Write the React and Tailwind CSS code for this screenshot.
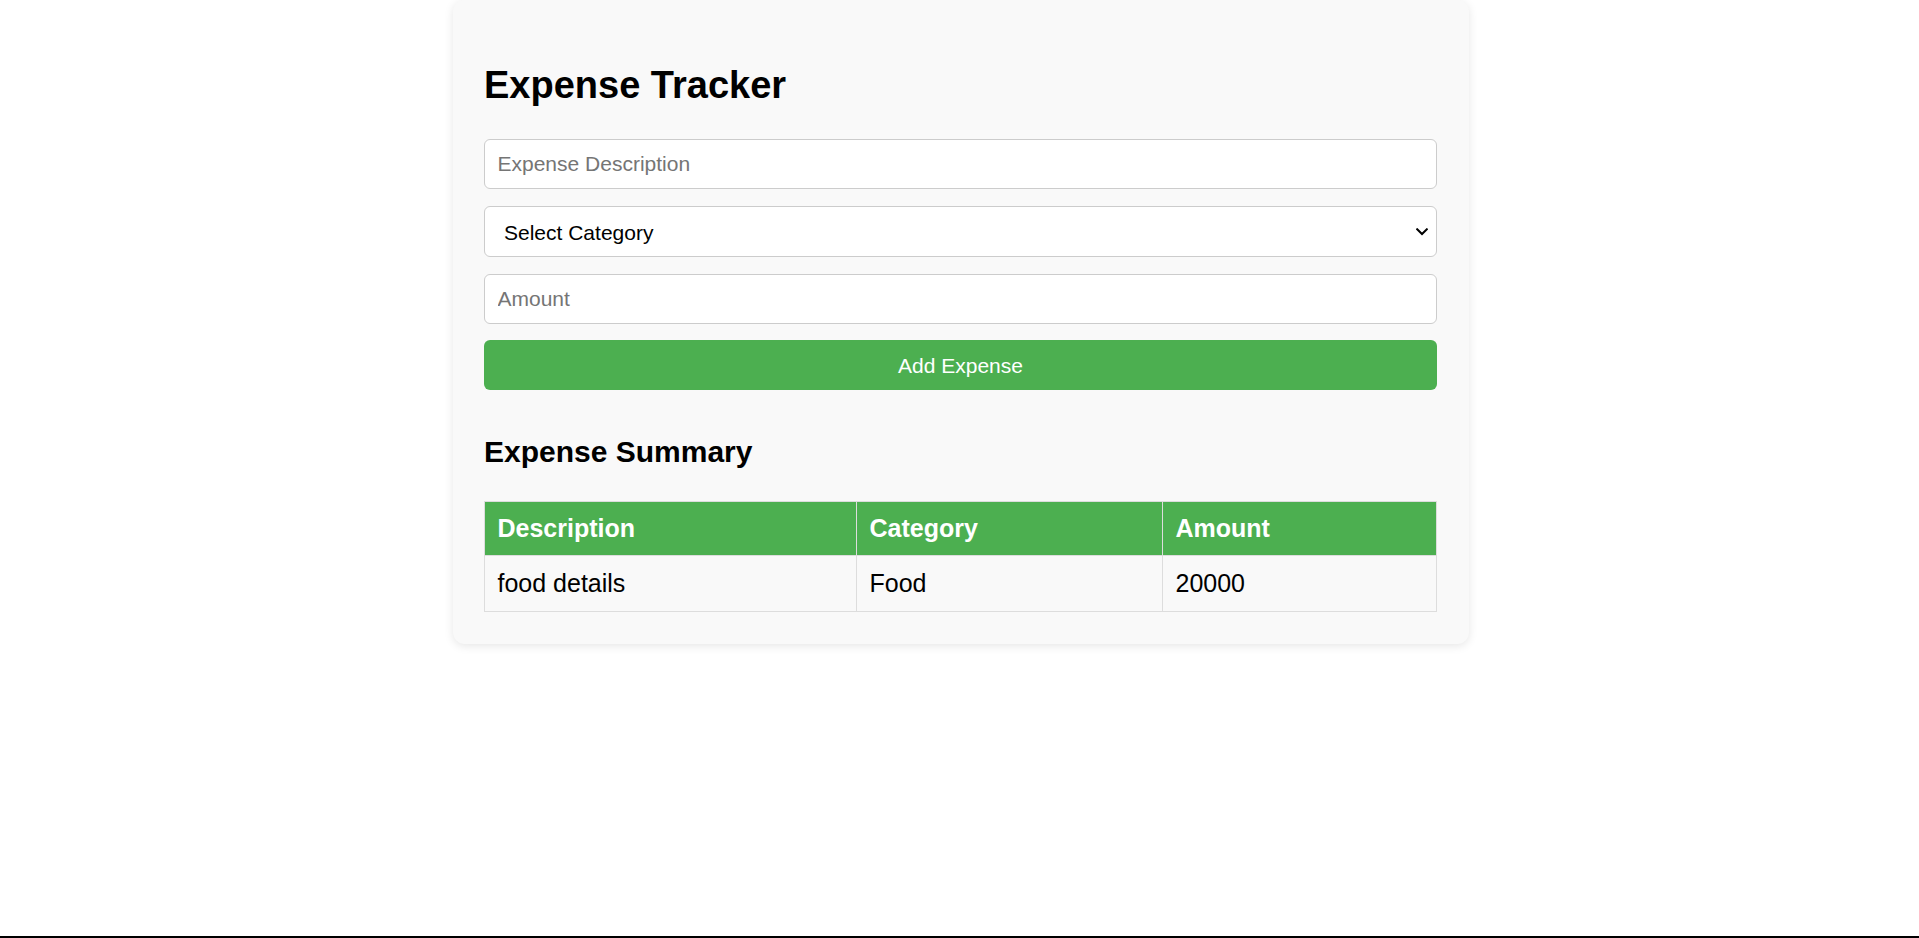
import React, { useState } from 'react';

const ExpenseTracker = () => {
    const [expenses, setExpenses] = useState([
        { id: 1, description: 'food details', category: 'Food', amount: 20000 },
    ]);
    const [description, setDescription] = useState('');
    const [category, setCategory] = useState('');
    const [amount, setAmount] = useState('');

    const addExpense = () => {
        if (!description || !category || !amount) return;
        setExpenses([...expenses, { id: Date.now(), description, category, amount }]);
        setDescription('');
        setCategory('');
        setAmount('');
    };

    const fieldClass = 'block w-full h-[50px] bg-white border border-[#cccccc] rounded-[6px] px-[12.5px] text-[21px] text-black outline-none placeholder:text-[#757575]';

    return (
        <div className="h-[938px] flex flex-col bg-white font-['Liberation_Sans',Arial,sans-serif]">
            <div className="flex justify-center pl-[3px]">
                <div className="w-[1016px] bg-[#f9f9f9] rounded-[12px] shadow-[0_2px_10px_rgba(0,0,0,0.1)] pl-[31px] pr-[32px] pb-[32px] pt-[31px]">
                    {/* Header */}
                    <h1 className="mt-[33px] mb-[32px] text-[38px] leading-[43px] font-bold text-black">Expense Tracker</h1>

                    {/* Form */}
                    <input
                        type="text"
                        placeholder="Expense Description"
                        value={description}
                        onChange={e => setDescription(e.target.value)}
                        className={fieldClass}
                    />
                    <div className="relative mt-[17px]">
                        <select
                            value={category}
                            onChange={e => setCategory(e.target.value)}
                            className="block w-full h-[51px] appearance-none bg-white border border-[#cccccc] rounded-[6px] pl-[19px] pr-[40px] pt-[3px] text-[21px] text-black outline-none"
                        >
                            <option value="">Select Category</option>
                            <option value="Food">Food</option>
                            <option value="Transport">Transport</option>
                            <option value="Shopping">Shopping</option>
                            <option value="Other">Other</option>
                        </select>
                        <svg className="absolute right-[9px] top-[22px] pointer-events-none" width="12" height="8" viewBox="0 0 12 8" fill="none">
                            <path d="M1.2 1.3 L6 6 L10.8 1.3" stroke="#000" strokeWidth="2" strokeLinecap="square" />
                        </svg>
                    </div>
                    <input
                        type="number"
                        placeholder="Amount"
                        value={amount}
                        onChange={e => setAmount(e.target.value)}
                        className={`${fieldClass} mt-[17px] [appearance:textfield] [&::-webkit-inner-spin-button]:appearance-none`}
                    />
                    <button
                        onClick={addExpense}
                        className="block w-full h-[50px] mt-[16px] pt-[1px] bg-[#4caf50] text-white text-[21px] rounded-[6px] cursor-pointer"
                    >
                        Add Expense
                    </button>

                    {/* Summary */}
                    <h2 className="mt-[45px] mb-[31px] text-[30px] leading-[34.5px] font-bold text-black">Expense Summary</h2>
                    <table className="w-full border-collapse text-[25px] text-left">
                        <thead>
                            <tr className="bg-[#4caf50] text-white">
                                <th className="w-[372px] border border-[#dddddd] px-[12.5px] py-[12px] font-bold leading-[29px]">Description</th>
                                <th className="w-[306px] border border-[#dddddd] px-[12.5px] py-[12px] font-bold leading-[29px]">Category</th>
                                <th className="border border-[#dddddd] px-[12.5px] py-[12px] font-bold leading-[29px]">Amount</th>
                            </tr>
                        </thead>
                        <tbody>
                            {expenses.map(exp => (
                                <tr key={exp.id} className="text-black">
                                    <td className="border border-[#dddddd] px-[12.5px] py-[13px] leading-[29px]">{exp.description}</td>
                                    <td className="border border-[#dddddd] px-[12.5px] py-[13px] leading-[29px]">{exp.category}</td>
                                    <td className="border border-[#dddddd] px-[12.5px] py-[13px] leading-[29px]">{exp.amount}</td>
                                </tr>
                            ))}
                        </tbody>
                    </table>
                </div>
            </div>
            <div className="mt-auto h-[2px] bg-black" />
        </div>
    );
};

export default ExpenseTracker;
